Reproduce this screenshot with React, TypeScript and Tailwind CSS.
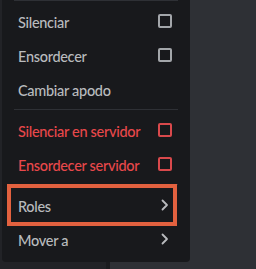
import React from "react";

type Item = {
  label: string;
  danger?: boolean;
  kind: "check" | "sub" | "none";
};

const GROUP_A: Item[] = [
  { label: "Silenciar", kind: "check" },
  { label: "Ensordecer", kind: "check" },
  { label: "Cambiar apodo", kind: "none" },
];

const GROUP_B: Item[] = [
  { label: "Silenciar en servidor", kind: "check", danger: true },
  { label: "Ensordecer servidor", kind: "check", danger: true },
];

const GROUP_C: Item[] = [
  { label: "Roles", kind: "sub" },
  { label: "Mover a", kind: "sub" },
];

function Chevron() {
  return (
    <svg width="18" height="18" viewBox="0 0 18 18" fill="none">
      <path d="M6.5 4.5 L11 9 L6.5 13.5" stroke="#b9bbbe" strokeWidth="1.8" strokeLinecap="round" strokeLinejoin="round" />
    </svg>
  );
}

function MenuItem({ item }: { item: Item }) {
  const color = item.danger ? "text-[#e8484b]" : "text-[#b9bbbe]";
  return (
    <div className={`flex h-[34px] items-center justify-between px-4 text-[14.5px] font-medium tracking-[-0.3px] ${color}`}>
      <span className="pt-[3px]">{item.label}</span>
      <span className="flex h-[18px] w-[18px] items-center justify-center">
        {item.kind === "check" && (
          <span
            className={`block h-[14px] w-[14px] rounded-[2px] border-2 ${
              item.danger ? "border-[#d9494c]" : "border-[#a3a6aa]"
            }`}
          />
        )}
        {item.kind === "sub" && <Chevron />}
      </span>
    </div>
  );
}

function Separator() {
  return <div className="mx-3 my-[3px] h-px bg-[#2e3035]" />;
}

export default function App() {
  return (
    <div
      className="relative flex h-[269px] w-[256px] overflow-hidden bg-[#2e3035]"
      style={{ fontFamily: "Lato, 'Noto Sans', sans-serif" }}
    >
      <div className="absolute inset-y-0 left-0 w-[110px] border-r-[4px] border-[#1b1c1f] bg-[#222327]" />
      <div className="relative ml-[2px] mt-[-3px] h-[265px] w-[188px] rounded-b-[4px] bg-[#18191c]">
        <Separator />
        {GROUP_A.map((it) => (
          <MenuItem key={it.label} item={it} />
        ))}
        <Separator />
        {GROUP_B.map((it) => (
          <MenuItem key={it.label} item={it} />
        ))}
        <Separator />
        {GROUP_C.map((it) => (
          <MenuItem key={it.label} item={it} />
        ))}
        {/* annotation frame around Roles */}
        <div className="pointer-events-none absolute left-[5px] top-[187px] h-[42px] w-[170px] border-4 border-[#e2613f]" />
      </div>
    </div>
  );
}
